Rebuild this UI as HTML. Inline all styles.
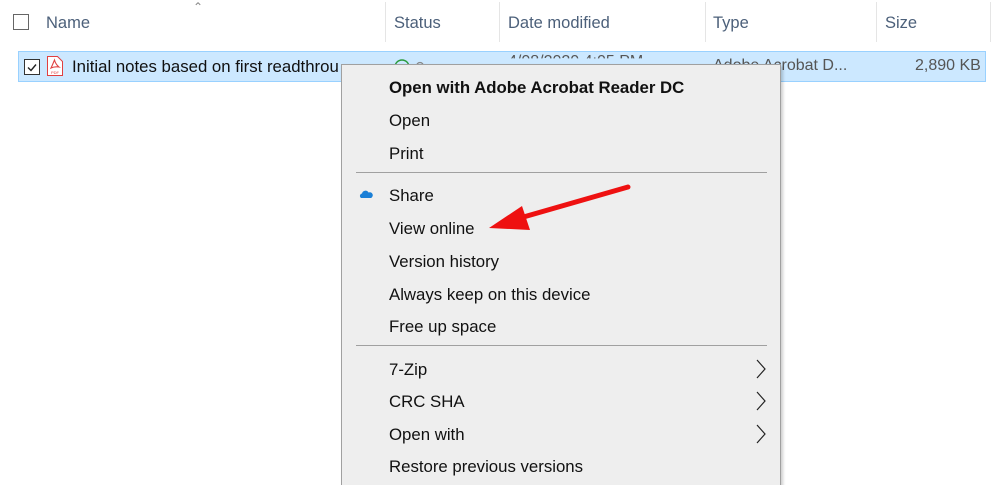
<!DOCTYPE html>
<html style="overflow:hidden;height:485px"><head><style>
body{margin:0;width:1000px;height:485px;background:#fff;position:relative;overflow:hidden;font-family:"Liberation Sans",sans-serif;}
.a{position:absolute;white-space:nowrap}
.h{color:#4c607a;font-size:16.5px;top:14px}
.vd{position:absolute;top:2px;width:1px;height:40px;background:#e5e5e5}
.cb{position:absolute;width:14px;height:14px;border:1px solid #555;background:#fff}
.mi{position:absolute;left:47px;font-size:16.8px;color:#111}
.sep{position:absolute;left:14px;width:411px;height:1px;background:#a0a0a0}
.chev{position:absolute;left:413px}
</style></head><body>
<div class="cb" style="left:13px;top:14px;border-color:#666"></div>
<div class="a" style="left:193px;top:0;color:#888;font-size:12px">&#8963;</div>
<div class="a h" style="left:46px">Name</div>
<div class="vd" style="left:385px"></div>
<div class="a h" style="left:394px">Status</div>
<div class="vd" style="left:499px"></div>
<div class="a h" style="left:508px">Date modified</div>
<div class="vd" style="left:705px"></div>
<div class="a h" style="left:713px">Type</div>
<div class="vd" style="left:876px"></div>
<div class="a h" style="left:885px">Size</div>
<div class="vd" style="left:990px"></div>

<div style="position:absolute;left:18px;top:51px;width:966px;height:29px;background:#cce8ff;border:1px solid #99d1ff"></div>
<div class="cb" style="left:24px;top:59px;border-color:#333"></div>
<svg style="position:absolute;left:24px;top:59px" width="16" height="16"><path d="M4 8.5l3 3 5-6" stroke="#222" stroke-width="1.4" fill="none"/></svg>
<svg style="position:absolute;left:46px;top:55px" width="18" height="22"><path d="M1.5 1.5h10l5 5v14h-15z" fill="#fff" stroke="#e04040"/><path d="M5 13c2-4 3-7 3.5-8 .5 2 2 5 4.5 7-3-.5-6 0-8 1z" fill="none" stroke="#e04040" stroke-width="1.1"/><text x="5" y="19" font-size="4" fill="#e04040">PDF</text></svg>
<div class="a" style="left:72px;top:57px;font-size:16.8px;color:#111">Initial notes based on first readthrou</div>
<svg style="position:absolute;left:390px;top:56px" width="40" height="12"><circle cx="12" cy="11" r="7" fill="none" stroke="#2a9a3a" stroke-width="1.4"/><circle cx="30" cy="10" r="3.5" fill="none" stroke="#888" stroke-width="1.2"/></svg>
<div class="a" style="left:508px;top:53px;font-size:16px;color:#555;clip-path:inset(0 0 70% 0)">4/08/2020 4:05 PM</div>
<div class="a" style="left:713px;top:57px;font-size:16px;color:#555">Adobe Acrobat D...</div>
<div class="a" style="left:915px;top:57px;font-size:16px;color:#555">2,890 KB</div>

<div style="position:absolute;left:341px;top:64px;width:438px;height:430px;background:#eeeeee;border:1px solid #a0a0a0;box-shadow:2px 2px 3px rgba(0,0,0,.2)">
 <div class="mi" style="top:13px;font-weight:bold">Open with Adobe Acrobat Reader DC</div>
 <div class="mi" style="top:46px">Open</div>
 <div class="mi" style="top:79px">Print</div>
 <div class="sep" style="top:107px"></div>
 <svg style="position:absolute;left:17px;top:125px" width="14" height="9"><path d="M2 8a2.5 2.5 0 0 1 1-4.5 3.5 3.5 0 0 1 6.5-1 2.8 2.8 0 0 1 2.5 5.5z" fill="#1a7fd6"/></svg>
 <div class="mi" style="top:121px">Share</div>
 <div class="mi" style="top:154px">View online</div>
 <div class="mi" style="top:187px">Version history</div>
 <div class="mi" style="top:220px">Always keep on this device</div>
 <div class="mi" style="top:252px">Free up space</div>
 <div class="sep" style="top:280px"></div>
 <div class="mi" style="top:295px">7-Zip</div>
 <div class="mi" style="top:327px">CRC SHA</div>
 <div class="mi" style="top:360px">Open with</div>
 <div class="mi" style="top:392px">Restore previous versions</div>
 <svg class="chev" style="top:294px" width="12" height="20"><path d="M2 1l8 9-8 9" fill="none" stroke="#222" stroke-width="1.2"/></svg>
 <svg class="chev" style="top:326px" width="12" height="20"><path d="M2 1l8 9-8 9" fill="none" stroke="#222" stroke-width="1.2"/></svg>
 <svg class="chev" style="top:359px" width="12" height="20"><path d="M2 1l8 9-8 9" fill="none" stroke="#222" stroke-width="1.2"/></svg>
</div>
<svg style="position:absolute;left:0;top:0" width="1000" height="485"><path d="M628 187L520 218" stroke="#ee1111" stroke-width="5" stroke-linecap="round"/><path d="M489 228L522 206 530 230z" fill="#ee1111"/></svg>
</body></html>
